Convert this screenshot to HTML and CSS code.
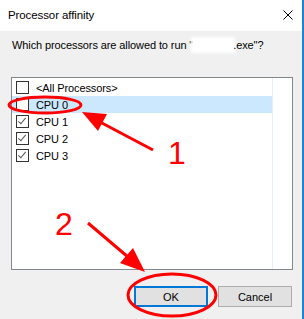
FILE: index.html
```html
<!DOCTYPE html>
<html lang="en">
<head>
    <meta charset="UTF-8">
    <title>Processor affinity</title>
    <link rel="stylesheet" href="styles.css">
</head>
<body>
    <div class="dialog">
        <div class="titlebar">
            <span class="title">Processor affinity</span>
            <svg class="close" width="10" height="10" viewBox="0 0 10 10">
                <path d="M0.5 0.5 L9.5 9.5 M9.5 0.5 L0.5 9.5" stroke="#000" stroke-width="1"/>
            </svg>
        </div>
        <div class="content">
            <p class="prompt">Which processors are allowed to run "<span class="blur">xxxxxx</span>.exe"?</p>
            <div class="listbox">
                <div class="rows">
                    <div class="row"><span class="box"></span>&lt;All Processors&gt;</div>
                    <div class="row selected"><span class="box"></span>CPU 0</div>
                    <div class="row"><span class="box checked"></span>CPU 1</div>
                    <div class="row"><span class="box checked"></span>CPU 2</div>
                    <div class="row"><span class="box checked"></span>CPU 3</div>
                </div>
                <div class="spare"></div>
            </div>
            <div class="buttons">
                <button class="btn default">OK</button>
                <button class="btn">Cancel</button>
            </div>
        </div>
    </div>

    <!-- red annotations drawn over the dialog -->
    <svg class="marks" width="304" height="319" viewBox="0 0 304 319">
        <g fill="none" stroke="#f00" stroke-width="3">
            <ellipse cx="45" cy="105" rx="36" ry="8"/>
            <ellipse cx="172" cy="295" rx="44" ry="21"/>
            <line x1="153" y1="150" x2="100" y2="122"/>
            <line x1="88" y1="223" x2="128" y2="257"/>
        </g>
        <g fill="#f00">
            <polygon points="82,112 107,114 98,131"/>
            <polygon points="145,272 133,248 120,263"/>
            <text x="168" y="164" class="num">1</text>
            <text x="55" y="235" class="num">2</text>
        </g>
    </svg>
</body>
</html>
```

FILE: styles.css
```css
body {
    margin: 0;
    width: 304px;
    height: 319px;
    position: relative;
    overflow: hidden;
    font-family: "Liberation Sans", Arial, sans-serif;
    font-size: 11px;
    letter-spacing: -0.1px;
    color: #000;
}
.dialog {
    display: flex;
    flex-direction: column;
    height: 319px;
    background: #f0f0f0;
    border-right: 2px solid #1a84d8;
}
.titlebar {
    height: 31px;
    background: #fff;
    display: flex;
    align-items: center;
    justify-content: space-between;
    padding: 0 9px 0 8px;
}
.title {
    font-size: 11.5px;
    margin-top: -1px;
}
.close {
    margin-top: -1px;
}
.content {
    flex: 1;
    display: flex;
    flex-direction: column;
    padding: 0 9px 0 11px;
}
.prompt {
    margin: 6px 0 0 1px;
    height: 16px;
    line-height: 16px;
    white-space: nowrap;
}
.blur {
    display: inline-block;
    width: 40px;
    height: 12px;
    vertical-align: -2px;
    color: transparent;
    background: #fff;
    box-shadow: 0 0 3px 2px #fff;
}
.listbox {
    margin-top: 24px;
    height: 191px;
    border: 1px solid #828790;
    background: #fff;
    display: flex;
}
.rows {
    width: 260px;
    padding-top: 1px;
    border-right: 1px solid #e6f0fa;
}
.row {
    height: 17px;
    display: flex;
    align-items: center;
    padding-left: 4px;
}
.row.selected {
    background: #cce8ff;
}
.box {
    width: 11px;
    height: 11px;
    border: 1px solid #333;
    background: #fff;
    margin-right: 7px;
    position: relative;
}
.box.checked::after {
    content: "";
    position: absolute;
    left: 3px;
    top: 0;
    width: 3px;
    height: 7px;
    border: solid #555;
    border-width: 0 1px 1px 0;
    transform: rotate(40deg);
}
.buttons {
    display: flex;
    justify-content: flex-end;
    gap: 10px;
    margin-top: 16px;
    padding-right: 1px;
}
.btn {
    width: 74px;
    height: 21px;
    background: #e1e1e1;
    border: 1px solid #adadad;
    font-family: inherit;
    font-size: 11px;
    padding: 0;
}
.btn.default {
    border: 2px solid #0078d7;
}
.marks {
    position: absolute;
    left: 0;
    top: 0;
}
.num {
    font-family: "Liberation Sans", sans-serif;
    font-size: 32px;
    letter-spacing: 0;
}
```
